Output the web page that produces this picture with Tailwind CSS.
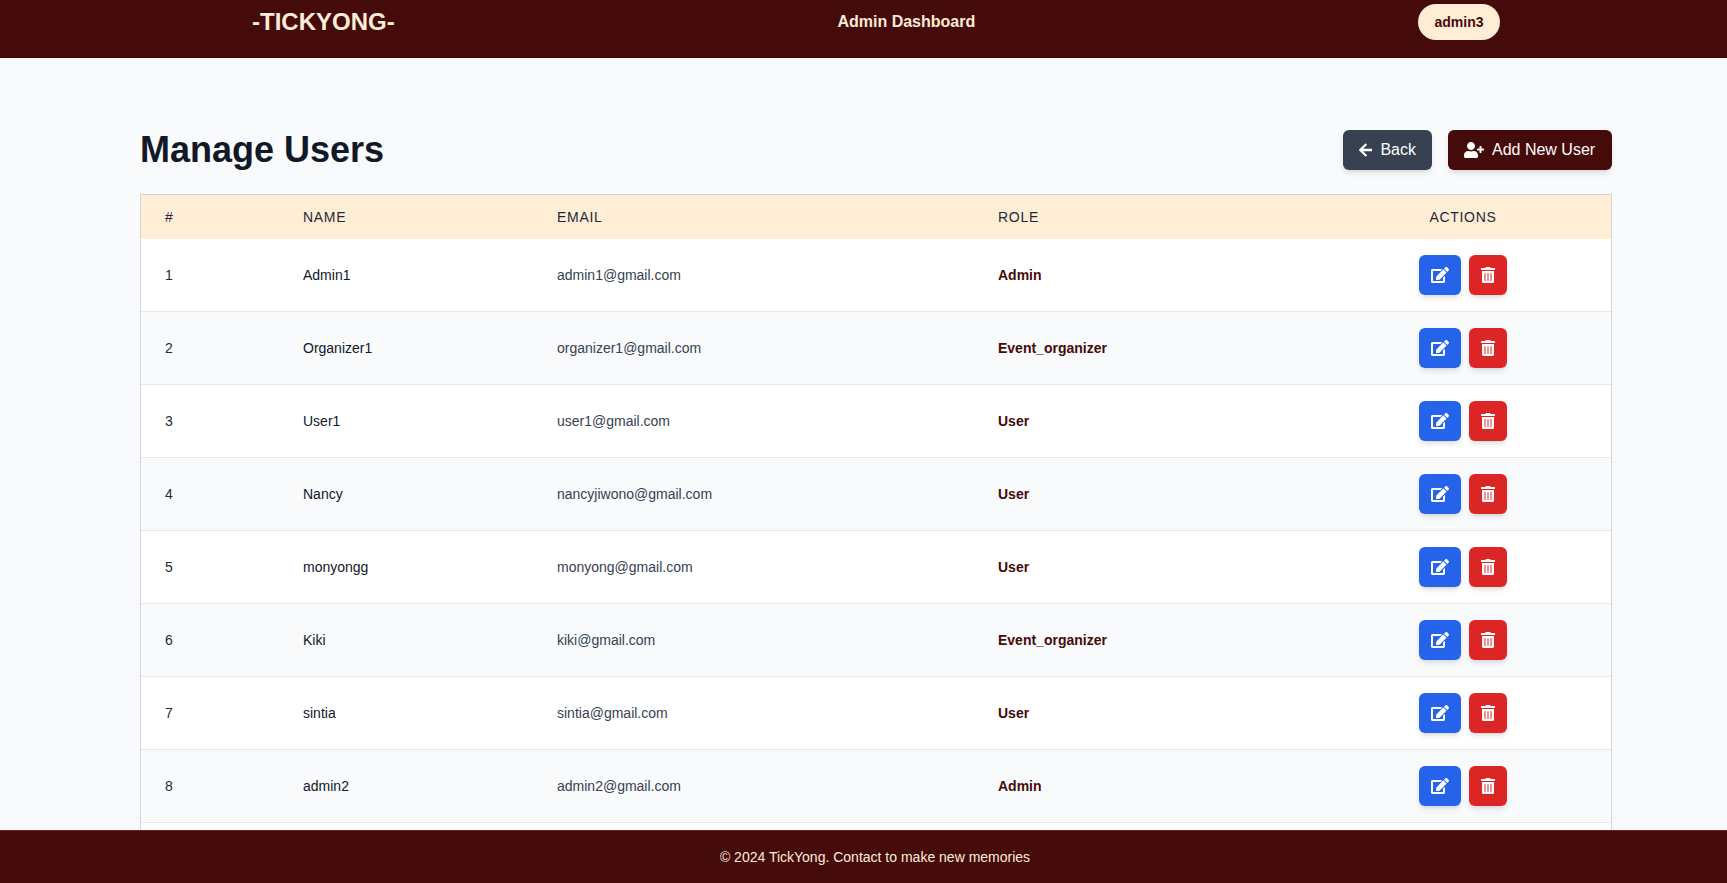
<!DOCTYPE html>
<html lang="en">
<head>
  <meta charset="UTF-8" />
  <title>Manage Users</title>
  <script src="https://cdn.jsdelivr.net/npm/@tailwindcss/browser@4"></script>
</head>
<body class="h-screen overflow-hidden bg-[#f9fafb] text-[#111827] font-['Liberation_Sans',Arial,sans-serif]">

  <!-- Header -->
  <header class="h-[58px] bg-[#450a0a] text-[#ffedd5] pl-[252px] pr-[227px] pt-1 flex justify-between items-start">
    <div class="h-9 flex items-center text-2xl font-bold">-TICKYONG-</div>
    <div class="h-9 flex items-center font-bold">Admin Dashboard</div>
    <div class="h-9 w-[82px] flex items-center justify-center rounded-full bg-[#ffedd5] text-[#450a0a] text-sm font-bold">admin3</div>
  </header>

  <!-- Main Content -->
  <main class="pl-[140px] pr-[115px] pt-[72px]">
    <div class="flex justify-between items-center mb-6">
      <h1 class="text-4xl font-bold text-[#111827]">Manage Users</h1>
      <div class="flex gap-4">
        <button class="h-10 w-[89px] px-4 flex items-center gap-2 rounded-md bg-[#374151] text-white shadow-md">
          <svg class="h-4 w-[14px]" viewBox="0 0 448 512" fill="currentColor"><path d="M257.5 445.1l-22.2 22.2c-9.4 9.4-24.6 9.4-33.9 0L7 273c-9.4-9.4-9.4-24.6 0-33.9L201.4 44.7c9.4-9.4 24.6-9.4 33.9 0l22.2 22.2c9.5 9.5 9.3 25-.4 34.3L136.6 216H424c13.3 0 24 10.7 24 24v32c0 13.3-10.7 24-24 24H136.6l120.5 114.8c9.8 9.3 10 24.8.4 34.3z"/></svg>
          Back
        </button>
        <button class="h-10 w-[164px] px-4 flex items-center gap-2 rounded-md bg-[#450a0a] text-white shadow-md">
          <svg class="h-4 w-5" viewBox="0 0 640 512" fill="currentColor"><path d="M624 208h-64v-64c0-8.8-7.2-16-16-16h-32c-8.8 0-16 7.2-16 16v64h-64c-8.8 0-16 7.2-16 16v32c0 8.8 7.2 16 16 16h64v64c0 8.8 7.2 16 16 16h32c8.8 0 16-7.2 16-16v-64h64c8.8 0 16-7.2 16-16v-32c0-8.8-7.2-16-16-16zm-400 48c70.7 0 128-57.3 128-128S294.7 0 224 0 96 57.3 96 128s57.3 128 128 128zm89.6 32h-16.7c-22.2 10.2-46.9 16-72.9 16s-50.6-5.8-72.9-16h-16.7C60.2 288 0 348.2 0 422.4V464c0 26.5 21.5 48 48 48h352c26.5 0 48-21.5 48-48v-41.6c0-74.2-60.2-134.4-134.4-134.4z"/></svg>
          Add New User
        </button>
      </div>
    </div>

    <div class="border border-[#d1d5db] bg-white">
      <table class="w-full table-fixed border-separate border-spacing-0 text-sm">
        <thead class="bg-[#ffedd5] text-[#1f2937] uppercase tracking-wider">
          <tr class="h-11">
            <th class="w-[138px] px-6 font-normal text-left">#</th>
            <th class="w-[254px] px-6 font-normal text-left">Name</th>
            <th class="w-[441px] px-6 font-normal text-left">Email</th>
            <th class="w-[341px] px-6 font-normal text-left">Role</th>
            <th class="px-6 font-normal text-center">Actions</th>
          </tr>
        </thead>
        <tbody id="users"></tbody>
      </table>
    </div>
  </main>

  <!-- Footer -->
  <footer class="fixed bottom-0 inset-x-0 h-[53px] border-t border-[#7f1d1d] bg-[#450a0a] text-[#ffedd5] text-sm flex items-center justify-center pl-[23px]">
    © 2024 TickYong. Contact to make new memories
  </footer>

  <script>
    const users = [
      ['Admin1', 'admin1@gmail.com', 'Admin'],
      ['Organizer1', 'organizer1@gmail.com', 'Event_organizer'],
      ['User1', 'user1@gmail.com', 'User'],
      ['Nancy', 'nancyjiwono@gmail.com', 'User'],
      ['monyongg', 'monyong@gmail.com', 'User'],
      ['Kiki', 'kiki@gmail.com', 'Event_organizer'],
      ['sintia', 'sintia@gmail.com', 'User'],
      ['admin2', 'admin2@gmail.com', 'Admin'],
      ['admin3', 'admin3@gmail.com', 'Admin'],
    ];

    document.getElementById('users').innerHTML = users.map((u, i) => `
      <tr class="h-[73px] even:bg-[#f9fafb]">
        <td class="px-6 border-b border-[#e5e7eb] text-[#1f2937]">${i + 1}</td>
        <td class="px-6 border-b border-[#e5e7eb] text-[#111827]">${u[0]}</td>
        <td class="px-6 border-b border-[#e5e7eb] text-[#374151]">${u[1]}</td>
        <td class="px-6 border-b border-[#e5e7eb] font-bold text-[#450a0a]">${u[2]}</td>
        <td class="px-6 border-b border-[#e5e7eb]">
          <div class="flex justify-center gap-2">
            <button class="h-10 px-3 flex items-center rounded-md bg-[#2563eb] text-white shadow-md">
              <svg class="h-4 w-[18px]" viewBox="0 0 576 512" fill="currentColor"><path d="M402.6 83.2l90.2 90.2c3.8 3.8 3.8 10 0 13.8L274.4 405.6l-92.8 10.3c-12.4 1.4-22.9-9.1-21.5-21.5l10.3-92.8L388.8 83.2c3.8-3.8 10-3.8 13.8 0zm162-22.9l-48.8-48.8c-15.2-15.2-39.9-15.2-55.2 0l-35.4 35.4c-3.8 3.8-3.8 10 0 13.8l90.2 90.2c3.8 3.8 10 3.8 13.8 0l35.4-35.4c15.2-15.3 15.2-40 0-55.2zM384 346.2V448H64V128h229.8c3.2 0 6.2-1.3 8.5-3.5l40-40c7.6-7.6 2.2-20.5-8.5-20.5H48C21.5 64 0 85.5 0 112v352c0 26.5 21.5 48 48 48h352c26.5 0 48-21.5 48-48V306.2c0-10.7-12.9-16-20.5-8.5l-40 40c-2.2 2.3-3.5 5.3-3.5 8.5z"/></svg>
            </button>
            <button class="h-10 px-3 flex items-center rounded-md bg-[#dc2626] text-white shadow-md">
              <svg class="h-4 w-[14px]" viewBox="0 0 448 512" fill="currentColor"><path d="M32 464a48 48 0 0 0 48 48h288a48 48 0 0 0 48-48V128H32zm272-256a16 16 0 0 1 32 0v224a16 16 0 0 1-32 0zm-96 0a16 16 0 0 1 32 0v224a16 16 0 0 1-32 0zm-96 0a16 16 0 0 1 32 0v224a16 16 0 0 1-32 0zM432 32H312l-9.4-18.7A24 24 0 0 0 281.1 0H166.8a23.72 23.72 0 0 0-21.4 13.3L136 32H16A16 16 0 0 0 0 48v32a16 16 0 0 0 16 16h416a16 16 0 0 0 16-16V48a16 16 0 0 0-16-16z"/></svg>
            </button>
          </div>
        </td>
      </tr>
    `).join('');
  </script>
</body>
</html>
